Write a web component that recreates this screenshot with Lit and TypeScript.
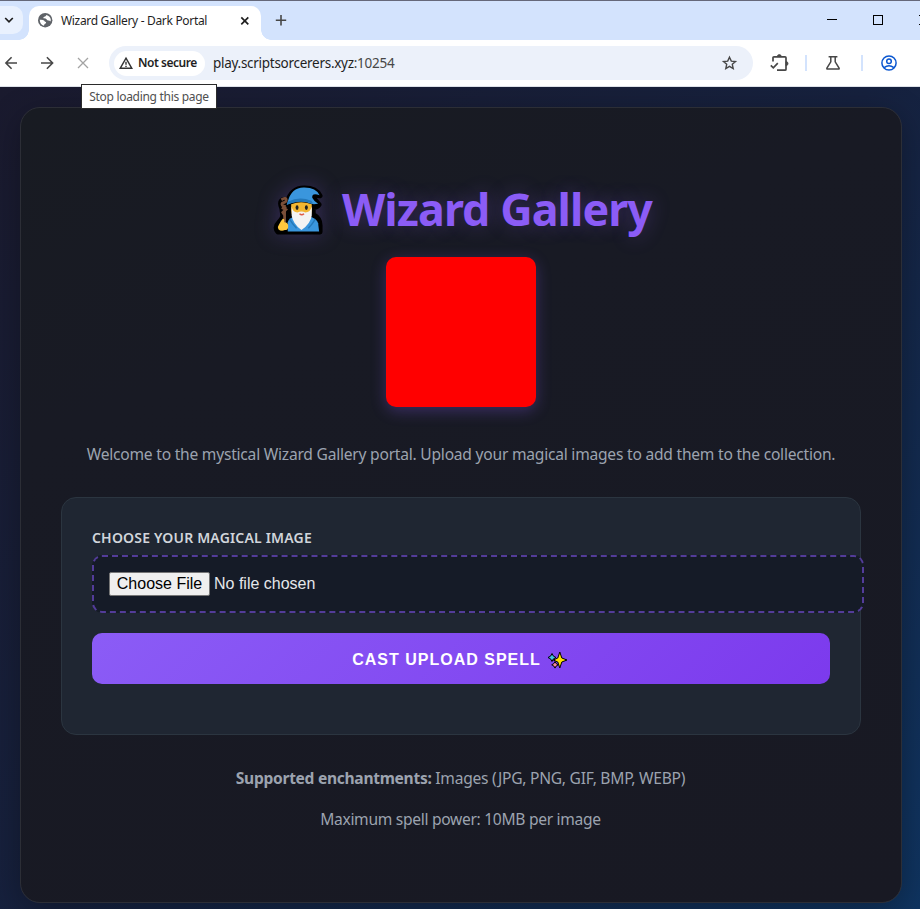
import { LitElement, html, css, svg } from "lit";
import { customElement } from "lit/decorators.js";

@customElement("browser-bar")
class BrowserBar extends LitElement {
  static styles = css`
    :host { display: block; height: 87px; box-sizing: border-box; position: relative; background: #fff;
      border-bottom: 1px solid #dde1e8; font-family: "Noto Sans", "Open Sans", sans-serif; color: #1f1f1f; }
    svg { display: block; flex: none; overflow: visible; }
    .strip { height: 40px; box-sizing: border-box; border-top: 1px solid #65687a; background: #d3e3fd; display: flex; }
    .search { width: 23px; height: 28px; margin-top: 5px; border-radius: 0 10px 10px 0; background: #e9f1fe; display: flex; align-items: center; }
    .search svg { margin-left: 4px; }
    .tab { width: 232px; height: 34px; margin: 5px 0 0 6px; border-radius: 10px 10px 0 0; background: #fff; display: flex; align-items: center; box-sizing: border-box; padding: 0 11px 5px 9px; position: relative; }
    .tab::before, .tab::after { content: ""; position: absolute; bottom: 0; width: 10px; height: 10px; }
    .tab::before { left: -10px; background: radial-gradient(circle at 0 0, transparent 9.5px, #fff 10px); }
    .tab::after { right: -10px; background: radial-gradient(circle at 100% 0, transparent 9.5px, #fff 10px); }
    .title { margin-left: 8px; flex: 1; font-size: 12px; line-height: 18px; white-space: nowrap; letter-spacing: -0.32px; }
    .plus { margin: 13px 0 0 14px; }
    .gap { flex: 1; }
    .min { margin: 18px 36px 0 0; width: 10px; height: 1px; background: #000; }
    .max { margin: 14px 36px 0 0; width: 10px; height: 10px; box-sizing: border-box; border: 1px solid #000; }
    .cls { width: 1px; height: 10px; margin-top: 14px; background: linear-gradient(#000 1px, transparent 1px 9px, #000 9px); }
    .tools { height: 46px; display: flex; align-items: center; }
    .tools > .back { margin-left: 5px; }
    .tools > .fwd { margin-left: 23px; }
    .tools > .stop { margin-left: 24px; }
    .omni { width: 644px; height: 34px; margin-left: 21px; border-radius: 17px; background: #ecf1fa; display: flex; align-items: center; box-sizing: border-box; padding: 0 16.5px 0 5px; }
    .chip { width: 91px; height: 25px; border-radius: 13px; background: #fff; display: flex; align-items: center; padding-left: 5px; box-sizing: border-box; font-size: 12px; font-weight: 600; line-height: 18px; white-space: nowrap; letter-spacing: -0.48px; }
    .chip svg { margin-right: 5px; }
    .url { margin-left: 8px; flex: 1; font-size: 13.5px; line-height: 20px; letter-spacing: -0.28px; }
    .url span { color: #474747; }
    .sep { width: 2px; height: 16px; background: #d3e3fd; }
    .ext { margin: 0 16px 0 17px; }
    .lab { margin: 0 21px 0 19px; }
    .me { margin-left: 18px; }
    .tip { position: absolute; left: 81px; top: 84px; width: 136px; height: 25px; box-sizing: border-box; border: 1px solid #2b2b2b; background: #fff; color: #505050; font-size: 12px; line-height: 24px; text-align: center; white-space: nowrap; letter-spacing: -0.3px; z-index: 2; }
  `;
  render() {
    return html`
      <div class="strip">
        <div class="search"><svg width="10" height="8" fill="none" stroke="#1f1f1f" stroke-width="1.7"><path d="M1.2 2 5 5.8 8.8 2" /></svg></div>
        <div class="tab">
          <svg width="15" height="15" viewBox="0 0 15 15"><circle cx="7.2" cy="7.2" r="7.2" fill="#5f6368" /><path d="M8.4 1.9Q7.800 3.600 6.300 3.700 5.200 3.800 5.300 5.200q2.500-.2 3.200 1 .6 1.200 2 1.300 1.500 0 1.900 1 .5-.9.4-2Q12.300 2.900 8.400 1.900ZM1.700 6.800q3.500-.3 4.600 1 .5 1.200 1.800 1.300.3 1.600-1.400 1.800-.6.700-.7 1.800Q2 11.700 1.700 6.800Z" fill="#fff" /></svg>
          <span class="title">Wizard Gallery - Dark Portal</span>
          <svg width="10" height="10" fill="none" stroke="#1f1f1f" stroke-width="1.7"><path d="m1.3 1.3 7 7m0-7-7 7" /></svg>
        </div>
        <svg class="plus" width="12" height="12" fill="none" stroke="#474747" stroke-width="1.6"><path d="M6 1v10.4M.8 6.2h10.4" /></svg>
        <div class="gap"></div><div class="min"></div><div class="max"></div><div class="cls"></div>
      </div>
      <div class="tools">
        <svg class="back" width="13" height="14" fill="none" stroke="#474747" stroke-width="1.6"><path d="M12 7H1.3M6.6 1.3.9 7l5.7 5.7" /></svg>
        <svg class="fwd" width="13" height="14" fill="none" stroke="#474747" stroke-width="1.6"><path d="M0 7h10.7M5.9 1.3 11.6 7l-5.7 5.7" /></svg>
        <svg class="stop" width="10" height="10" fill="none" stroke="#a3a3a3" stroke-width="1.3"><path d="m0 0 10 10m0-10L0 10" /></svg>
        <div class="omni">
          <div class="chip"><svg width="14" height="12" viewBox="0 0 14 12" fill="none" stroke="#333" stroke-width="1.4"><path d="m7 1.2 5.8 10.1H1.2ZM7 4.8v3M7 8.8v1.2" /></svg>Not secure</div>
          <div class="url">play.scriptsorcerers.xyz<span>:10254</span></div>
          <svg width="15" height="14" viewBox="0 0 15 14" fill="none" stroke="#474747" stroke-width="1.4"><path d="m7.5 1.2 1.8 3.9 4.2.4-3.2 2.8.9 4.2-3.7-2.2-3.7 2.2.9-4.2-3.2-2.8 4.2-.4Z" /></svg>
        </div>
        <svg class="ext" width="19" height="18" viewBox="0 0 19 18" fill="none" stroke="#474747" stroke-width="1.7"><path d="M3 7.4V3.8q0-1 1-1h11q1 0 1 1v11.4q0 1-1 1H7M.8 11.3l2.5 2.5 4.5-4.6" /><path d="M7.3 2.6a2 2 0 0 1 4 0ZM16 7.6a2 2 0 0 1 0 4Z" fill="#474747" stroke="#474747" stroke-width=".8" /></svg>
        <div class="sep"></div>
        <svg class="lab" width="14" height="14" viewBox="0 0 14 14" fill="none" stroke="#474747" stroke-width="1.5"><path d="M2.6.8h8.8M4.8.8v5L.9 12.2q-.4.9.6.9h11q1 0 .6-.9L9.2 5.8v-5" /></svg>
        <div class="sep"></div>
        <svg class="me" width="16" height="16" viewBox="0 0 16 16" fill="none" stroke="#0b57d0" stroke-width="1.5"><circle cx="8" cy="8" r="7.1" /><circle cx="8" cy="6.2" r="2.3" /><path d="M3.1 12.7Q8 8.7 12.9 12.7" /></svg>
      </div>
      <div class="tip">Stop loading this page</div>`;
  }
}

const wizard = svg`
  <path d="M13 19Q17 3 31 3q12 0 16 8-6-1-6 3l5 6q-2 3-6 3v7q7 4 7 11v7H4q-4-5 1-10 3-3 4-6l-1-8q-3-7 1-9Z" stroke="#000" stroke-width="5" stroke-linejoin="round" fill="#000"/>
  <path d="M10.8 45V28l.7-6M7.500 15q5-3 5 .5 0 2-4 3-2 2.500 3.500 3.500m-4 1 4 2-3 3 2 3" fill="none" stroke="#7a4f38" stroke-width="2.800"/>
  <path d="M14 47.500V38q1-5 8-6h13q8 1 10 7l1 8.500Z" fill="#3a96dd"/>
  <path d="M16 35q3 5 7 9M42 35q-3 5-7 9" stroke="#2478b9" stroke-width="1.500" fill="none"/>
  <path d="M17.500 19.500q10-4 21 0V26q0 9-10.500 9T17.500 26Z" fill="#f2b632"/>
  <path d="M18 22q1 6 6 6 4-2 8 0 5 0 6.500-6v9q-1 8-10.500 15Q19 39 18 31Z" fill="#f3f3f3"/>
  <ellipse cx="23.500" cy="23" rx="1.500" ry="2.400" fill="#202020"/><ellipse cx="33" cy="23" rx="1.500" ry="2.400" fill="#202020"/>
  <path d="M26 29.300q2.300 2 4.600 0" fill="none" stroke="#df5b47" stroke-width="1.500"/>
  <path d="M14 17Q18 2 31 2.500q12 0 15.500 8-8-3-7.500 2.500 2 4 6 6-5 1-7 0-12-5-25 1Z" fill="#3a96dd"/>
  <path d="M14 17q12-6 24-1l2 3q-13-5-27 1.500Z" fill="#2478b9"/>
  <path d="M5 40.500q2-4 4-6 2 0 1.500 3.500 4 0 4 4t-3.500 4q-4 1.500-6.500-1-1.500-2 .5-4.500Z" fill="#ffc83d"/>`;

@customElement("app-root")
class AppRoot extends LitElement {
  static styles = css`
    :host { display: flex; flex-direction: column; height: 909px; overflow: hidden; font-family: "Noto Sans", "Open Sans", sans-serif; }
    * { box-sizing: border-box; }
    svg { display: block; flex: none; overflow: visible; }
    .page { flex: 1; padding: 20px 18px 6px 20px; background: linear-gradient(135deg, #1a1a2e 0%, #16213e 50%, #0f3460 100%); }
    .card { height: 796px; padding: 61px 40px 0; border: 1px solid #2c2e36; border-radius: 20px; background: linear-gradient(160deg, #181b22, #181a24 30%, #181923); box-shadow: 0 8px 32px rgba(0,0,0,.3); display: flex; flex-direction: column; align-items: center; color: #9ca3af; }
    h1 { margin: 0 0 8px; padding-left: 4px; height: 80px; display: flex; align-items: center; color: #8b5cf6; font-size: 44.8px; line-height: 60px; font-weight: 700; text-shadow: 0 0 20px rgba(139,92,246,.3); white-space: nowrap; letter-spacing: -0.93px; }
    h1 svg { margin: 2px 17px 0 0; filter: drop-shadow(0 0 10px rgba(139,92,246,.25)); }
    .square { width: 150px; height: 150px; flex: none; border-radius: 10px; background: #f00; box-shadow: 0 4px 15px rgba(139,92,246,.3); }
    .welcome { margin: 34px 0 0; font-size: 15.6px; line-height: 26px; white-space: nowrap; letter-spacing: -0.23px; }
    .form { width: 800px; height: 238px; flex: none; margin-top: 30px; padding: 28px 30px 0; border: 1px solid #2b3540; border-radius: 15px; background: #1f2632; }
    .label { height: 29px; font-size: 14px; line-height: 24px; font-weight: 600; color: #d1d5db; letter-spacing: .18px; white-space: nowrap; }
    .file { width: 772px; height: 58px; border: 2px dashed #533c99; border-radius: 10px; background: #151b27; padding-left: 15px; display: flex; align-items: center; font: 16px/20px "Liberation Sans", sans-serif; color: #e5e7eb; }
    .choose { width: 101px; height: 24px; border: 1px solid #767676; border-radius: 2px; background: #efefef; color: #000; font: inherit; padding: 0; margin: 0 4px 0 0; white-space: nowrap; }
    .cast { width: 738px; height: 51px; margin: 20px 0 0; border: 0; border-radius: 10px; background: linear-gradient(135deg, #8b5cf6, #7c3aed); color: #fff; font: bold 16px/20px "Liberation Sans", sans-serif; letter-spacing: 1px; display: flex; align-items: center; justify-content: center; padding: 2px 2px 0 0; }
    .cast svg { margin: 1px 0 0 7px; }
    .note { margin: 30px 0 0; padding-right: 1px; font-size: 15.6px; line-height: 26px; white-space: nowrap; letter-spacing: -0.25px; }
    .note b { letter-spacing: -0.3px; }
    .power { margin-top: 15px; letter-spacing: -0.3px; }
  `;
  render() {
    return html`
      <browser-bar></browser-bar>
      <div class="page"><div class="card">
        <h1><svg width="51" height="51" viewBox="0 0 52 52">${wizard}</svg><span class="name">Wizard Gallery</span></h1>
        <div class="square"></div>
        <p class="welcome">Welcome to the mystical Wizard Gallery portal. Upload your magical images to add them to the collection.</p>
        <div class="form">
          <div class="label">CHOOSE YOUR MAGICAL IMAGE</div>
          <div class="file"><button class="choose">Choose File</button><span>No file chosen</span></div>
          <button class="cast"><span class="casttext">CAST UPLOAD SPELL</span><svg width="20" height="19" viewBox="0 0 20 19" stroke="#000" stroke-width="1" stroke-linejoin="round"><path d="M4 2.500 5.400 5.100 8 6.500 5.400 7.900 4 10.500 2.600 7.900 0 6.500 2.600 5.100Z" fill="#40c5df"/><path d="m7 10.500 1.200 2.100 2.100 1.200-2.100 1.200L7 17.100 5.800 15l-2.100-1.200 2.100-1.200Z" fill="#f9899a"/><path d="m11.800 1 2 6 5.200 2-5.200 2-2 6-2-6-4.500-2 4.500-2Z" fill="#ffe000"/></svg></button>
        </div>
        <p class="note"><b>Supported enchantments:</b> Images (JPG, PNG, GIF, BMP, WEBP)</p>
        <p class="note power">Maximum spell power: 10MB per image</p>
      </div></div>`;
  }
}
